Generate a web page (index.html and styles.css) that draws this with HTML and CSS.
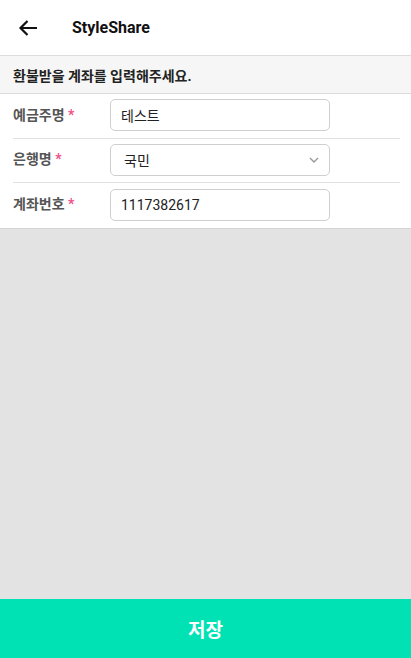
FILE: index.html
```html
<!DOCTYPE html>
<html lang="ko">
<head>
  <meta charset="UTF-8">
  <meta name="viewport" content="width=device-width, initial-scale=1.0">
  <title>StyleShare</title>
  <link rel="stylesheet" href="styles.css">
</head>
<body>
  <header class="topbar">
    <button class="back" aria-label="뒤로">
      <svg width="20" height="18" viewBox="0 0 20 18"><path d="M19 9H2.5M9.5 2L2.5 9l7 7" fill="none" stroke="#111" stroke-width="2.2"/></svg>
    </button>
    <h1>StyleShare</h1>
  </header>
  <div class="notice">환불받을 계좌를 입력해주세요.</div>
  <form class="form">
    <div class="row">
      <label>예금주명 <span class="req">*</span></label>
      <div class="field">테스트</div>
    </div>
    <div class="row">
      <label>은행명 <span class="req">*</span></label>
      <div class="field select">
        <span>국민</span>
        <svg width="10" height="6" viewBox="0 0 10 6"><path d="M1 1l4 4 4-4" fill="none" stroke="#999" stroke-width="1.4"/></svg>
      </div>
    </div>
    <div class="row">
      <label>계좌번호 <span class="req">*</span></label>
      <div class="field">1117382617</div>
    </div>
  </form>
  <div class="filler"></div>
  <button class="save">저장</button>
</body>
</html>
```

FILE: styles.css
```css
* { box-sizing: border-box; margin: 0; padding: 0; }
html, body { height: 100%; }
body {
  font-family: Roboto, "Noto Sans CJK KR", sans-serif;
  color: #222;
  display: flex; flex-direction: column;
  background: #fff;
}
.topbar {
  height: 56px; display: flex; align-items: center;
  border-bottom: 1px solid #dcdcdc;
}
.back { background: none; border: none; width: 56px; height: 56px;
  display: flex; align-items: center; padding-left: 18px; }
.topbar h1 { font-size: 16px; font-weight: 700; margin-left: 16px; color: #111; }
.notice {
  height: 38px; display: flex; align-items: center; padding-left: 13px;
  background: #f6f6f6; border-bottom: 1px solid #dcdcdc;
  font-size: 14px; font-weight: 700; color: #222;
}
.form { border-bottom: 1px solid #d4d4d4; }
.row {
  height: 44.5px; display: flex; align-items: center;
  margin: 0 11px 0 13px;
  border-bottom: 1px solid #e2e2e2;
}
.row:last-child { border-bottom: none; }
.row label { width: 97px; font-size: 14px; font-weight: 700; color: #555; margin-top: -4px; }
.req { color: #f0508a; font-size: 14px; }
.field {
  width: 220px; height: 32px; border: 1px solid #cfcfcf; border-radius: 5px;
  display: flex; align-items: center; padding-left: 10px;
  font-size: 14px; color: #222; margin-top: -1px;
}
.select { justify-content: space-between; padding: 0 10px 0 13px; }
.filler { flex: 1; background: #e3e3e3; }
.save {
  height: 59px; border: none; background: #00e2b3; color: #fff;
  font-family: "Noto Sans CJK KR", sans-serif;
  font-size: 19px; font-weight: 700;
}
```
